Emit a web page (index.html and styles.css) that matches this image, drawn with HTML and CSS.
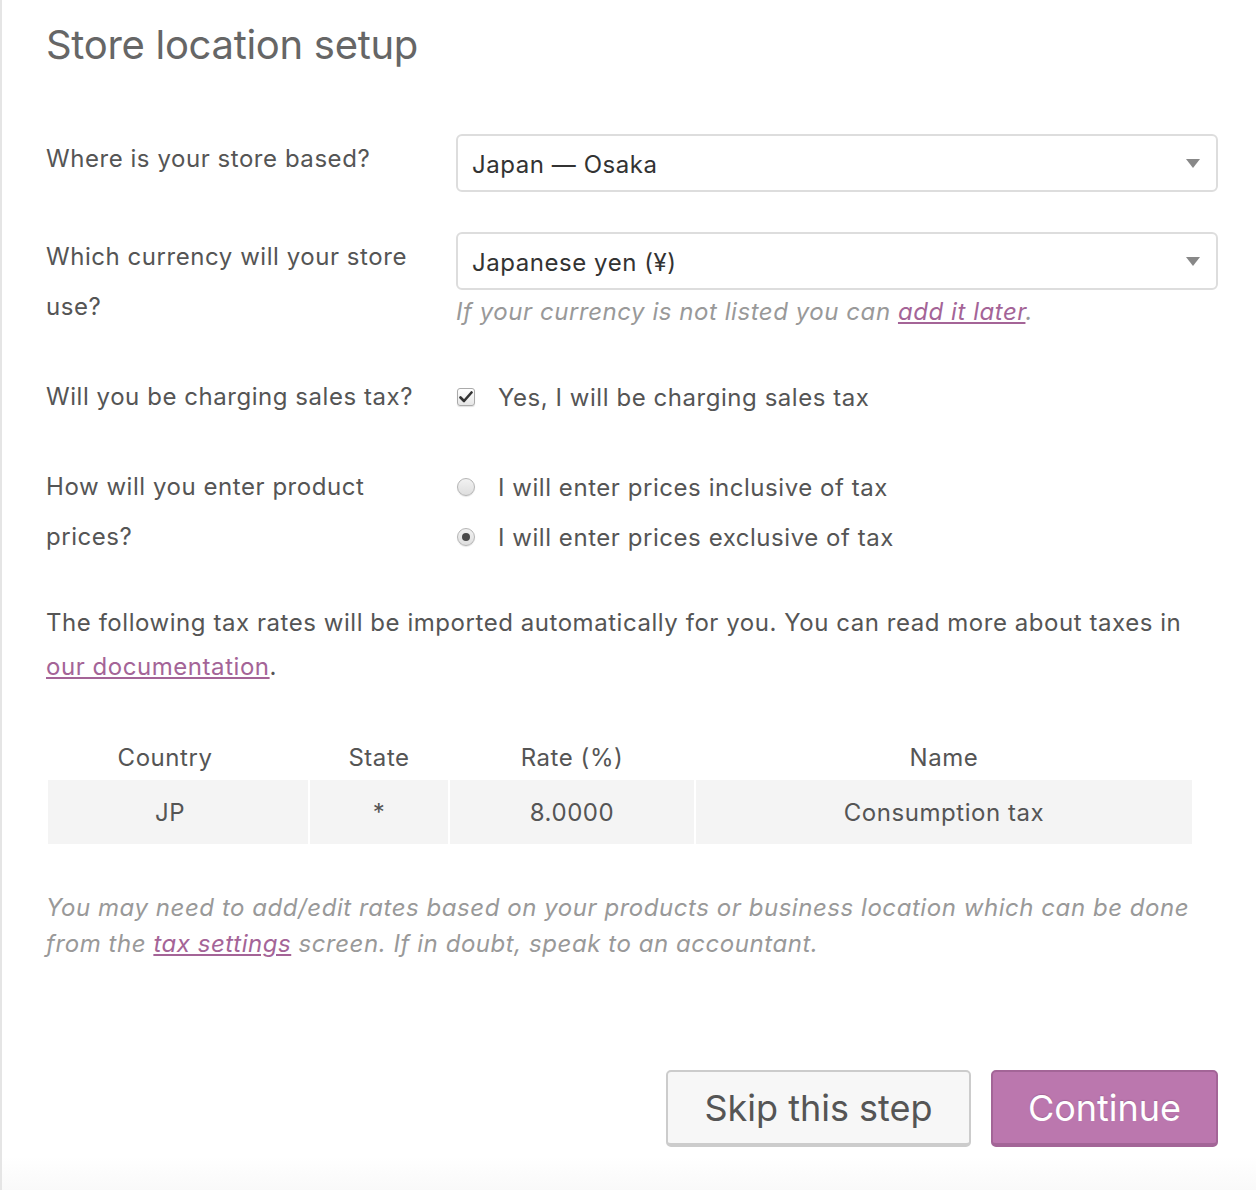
FILE: index.html
```html
<!DOCTYPE html>
<html lang="en">
<head>
<meta charset="utf-8">
<title>Store location setup</title>
<link rel="stylesheet" href="styles.css">
</head>
<body>
<div class="setup">
  <h1 class="title">Store location setup</h1>

  <div class="form">
    <div class="label">Where is your store based?</div>
    <div class="field">
      <div class="select"><span>Japan — Osaka</span><span class="arrow"></span></div>
    </div>

    <div class="label">Which currency will your store use?</div>
    <div class="field">
      <div class="select"><span>Japanese yen (¥)</span><span class="arrow"></span></div>
      <p class="help">If your currency is not listed you can <a href="#">add it later</a>.</p>
    </div>

    <div class="label">Will you be charging sales tax?</div>
    <div class="field">
      <div class="option">
        <span class="checkbox"><svg width="14" height="12" viewBox="0 0 14 12"><path d="M1.5 6.5 L5 10 L12.5 1.5" fill="none" stroke="#333" stroke-width="2.6" stroke-linecap="round" stroke-linejoin="round"/></svg></span>
        <span>Yes, I will be charging sales tax</span>
      </div>
    </div>

    <div class="label">How will you enter product prices?</div>
    <div class="field">
      <div class="option"><span class="radio"></span><span>I will enter prices inclusive of tax</span></div>
      <div class="option"><span class="radio checked"></span><span>I will enter prices exclusive of tax</span></div>
    </div>
  </div>

  <p class="intro">The following tax rates will be imported automatically for you. You can read more about taxes in <a href="#">our documentation</a>.</p>

  <table class="rates">
    <thead>
      <tr><th class="c-country">Country</th><th class="c-state">State</th><th class="c-rate">Rate (%)</th><th class="c-name">Name</th></tr>
    </thead>
    <tbody>
      <tr><td class="jp">JP</td><td>*</td><td>8.0000</td><td>Consumption tax</td></tr>
    </tbody>
  </table>

  <p class="note">You may need to add/edit rates based on your products or business location which can be done from the <a href="#">tax settings</a> screen. If in doubt, speak to an accountant.</p>

  <div class="actions">
    <button class="btn btn-skip">Skip this step</button>
    <button class="btn btn-primary">Continue</button>
  </div>
  <div class="foot"></div>
</div>
</body>
</html>
```

FILE: styles.css
```css
html, body {
  margin: 0;
  padding: 0;
  background: #fff;
}
body {
  font-family: Inter, "Liberation Sans", Arial, sans-serif;
  color: #555;
  font-size: 24px;
  letter-spacing: 0.55px;
}
.setup {
  border-left: 2px solid #e5e5e5;
  min-height: 1190px;
  box-sizing: border-box;
  padding: 0 38px 0 44px;
  display: flex;
  flex-direction: column;
}
.title {
  margin: 18px 0 0;
  font-size: 40px;
  font-weight: 400;
  line-height: 54px;
  color: #666;
  letter-spacing: -0.3px;
}
.form {
  margin-top: 62px;
  display: grid;
  grid-template-columns: 410px 1fr;
  row-gap: 40px;
}
.label {
  line-height: 50px;
  padding-right: 30px;
  color: #555;
}
.field {
  min-width: 0;
}
.select {
  height: 58px;
  box-sizing: border-box;
  border: 2px solid #ddd;
  border-radius: 6px;
  display: flex;
  align-items: center;
  justify-content: space-between;
  padding: 0 16px 0 14px;
  color: #333;
  background: #fff;
}
.select span:first-child {
  padding-top: 2px;
}
.arrow {
  width: 0;
  height: 0;
  border-left: 7px solid transparent;
  border-right: 7px solid transparent;
  border-top: 9px solid #888;
}
.help {
  margin: 4px 0 0;
  line-height: 36px;
  font-style: italic;
  color: #999;
}
a {
  color: #a46497;
}
.option {
  display: flex;
  align-items: center;
  height: 50px;
  gap: 23px;
  padding-left: 1px;
}
.checkbox {
  width: 18px;
  height: 18px;
  box-sizing: border-box;
  border: 1px solid #aaa;
  border-radius: 3px;
  background: linear-gradient(#fff, #e6e6e6);
  display: flex;
  align-items: center;
  justify-content: center;
  box-shadow: 0 1px 1px rgba(0,0,0,0.12);
}
.radio {
  width: 18px;
  height: 18px;
  box-sizing: border-box;
  border: 1px solid #b5b5b5;
  border-radius: 50%;
  background: linear-gradient(#f2f2f2, #dedede);
  box-shadow: 0 1px 1px rgba(0,0,0,0.1);
  display: flex;
  align-items: center;
  justify-content: center;
}
.radio.checked::after {
  content: "";
  width: 8px;
  height: 8px;
  border-radius: 50%;
  background: #4a4a4a;
}
.intro {
  margin: 39px 0 0;
  line-height: 44px;
}
.rates {
  margin-top: 45px;
  border-spacing: 2px;
  width: 1148px;
  text-align: center;
  color: #555;
}
.rates th {
  font-weight: 400;
  height: 42px;
  padding: 0;
}
.rates td {
  background: #f4f4f4;
  height: 64px;
  padding: 0;
}
.rates th.c-country { padding-right: 26px; width: 234px; }
.rates td.jp { padding-right: 16px; }
.c-state { width: 138px; }
.c-rate { width: 244px; }
.c-name { width: 496px; }
.note {
  margin: 44px 0 0;
  line-height: 36px;
  font-style: italic;
  color: #999;
}
.actions {
  margin-top: 108px;
  display: flex;
  justify-content: flex-end;
  gap: 20px;
}
.btn {
  font-family: inherit;
  font-size: 36px;
  letter-spacing: 0;
  height: 77px;
  border-radius: 5px;
  box-sizing: border-box;
  cursor: pointer;
}
.btn-skip {
  width: 305px;
  background: #f7f7f7;
  border: 2px solid #ccc;
  border-bottom-width: 4px;
  color: #555;
}
.btn-primary {
  width: 227px;
  background: #bb77ae;
  border: 2px solid #a36597;
  border-bottom-width: 4px;
  color: #fff;
  text-shadow: 0 -1px 1px #a36597;
}
.foot {
  flex: 1;
  margin: 10px -38px 0 -44px;
  background: linear-gradient(#fff, #f9f9f9);
}
```
